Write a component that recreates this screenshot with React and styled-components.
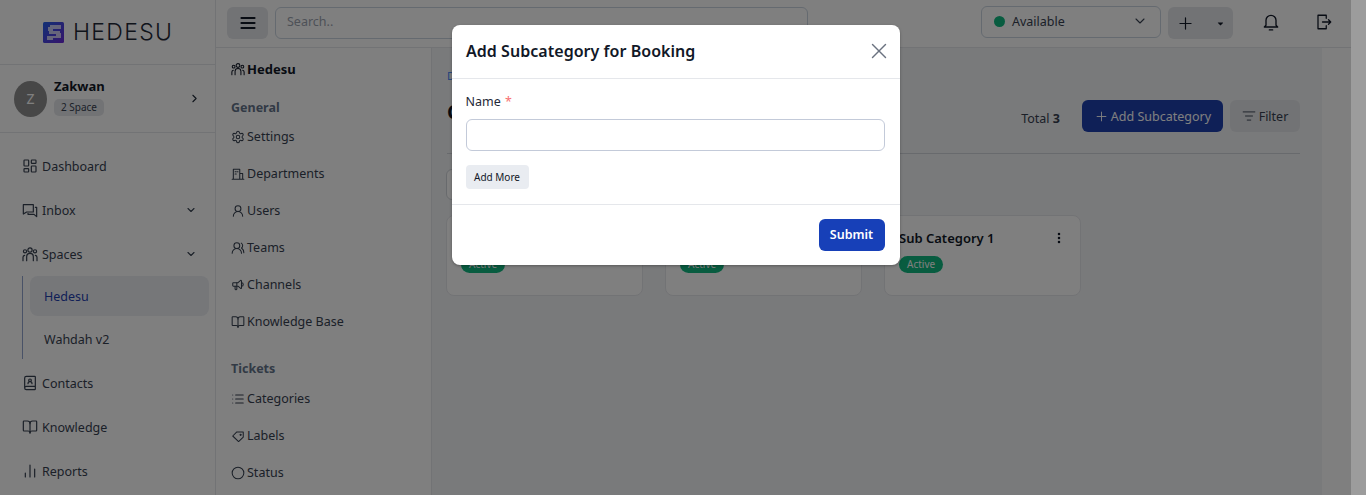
import React from "react";
import styled, { createGlobalStyle } from "styled-components";
import {
  TbMenu2, TbPlus, TbCaretDownFilled, TbDotsVertical, TbX, TbSpeakerphone,
} from "react-icons/tb";
import {
  LayoutDashboard, BookUser, BookOpen, ChartNoAxesColumn, ChevronDown, ChevronRight, Settings,
  UserRound, UsersRound, List, Circle, ListFilter,
} from "lucide-react";

const GlobalStyle = createGlobalStyle`
  html, body { margin: 0; padding: 0; height: 100%; overflow: hidden; }
  body { font-family: "Noto Sans", sans-serif; font-size: 12.5px; color: #1f2937; background: #fff; }
  * { box-sizing: border-box; }
`;

const Page = styled.div`
  position: relative;
  display: flex;
  width: 1366px;
  height: 495px;
  overflow: hidden;
`;

const Sidebar = styled.aside`
  flex: 0 0 216px;
  border-right: 1px solid #e5e7eb;
  background: #fff;
`;

const LogoBar = styled.div`
  height: 65px;
  display: flex;
  align-items: center;
  gap: 9px;
  padding-left: 43px;
  border-bottom: 1px solid #e5e7eb;
`;

const LogoText = styled.span`
  font-family: "Inter", sans-serif;
  font-weight: 300;
  font-size: 23px;
  letter-spacing: 1.3px;
  color: #1f2937;
`;

const UserBox = styled.div`
  height: 68px;
  display: flex;
  align-items: center;
  gap: 7px;
  padding: 0 14px;
  border-bottom: 1px solid #e5e7eb;
`;

const Avatar = styled.div`
  width: 33px;
  height: 36px;
  border-radius: 50%;
  background: #8f8f8f;
  color: #fff;
  display: flex;
  align-items: center;
  justify-content: center;
  font-size: 14px;
`;

const UserInfo = styled.div`
  flex: 1;
  display: flex;
  flex-direction: column;
  align-items: flex-start;
  gap: 5px;
  margin-bottom: 4px;
`;

const UserName = styled.strong`
  font-size: 13px;
  line-height: 16px;
  font-weight: 700;
  color: #111827;
`;

const SpaceBadge = styled.span`
  font-size: 10px;
  line-height: 17px;
  padding: 0 7px;
  border-radius: 5px;
  background: #e5e7eb;
  color: #374151;
`;

const Nav = styled.nav`
  padding: 11px 0 0 22px;
  display: flex;
  flex-direction: column;
`;

const NavItem = styled.div`
  height: 44px;
  display: flex;
  align-items: center;
  gap: 4px;
  padding-right: 18px;
  color: #374151;
  font-size: 12.5px;
  svg { flex: none; }
`;

const NavLabel = styled.span`
  flex: 1;
`;

const SubList = styled.div`
  display: flex;
  flex-direction: column;
  gap: 3px;
  padding-left: 7px;
  margin: 0 6px 2px 0;
  border-left: 1px solid #93a5cf;
`;

const SubItem = styled.div`
  height: 40px;
  display: flex;
  align-items: center;
  padding-left: 14px;
  border-radius: 8px;
  font-size: 12.5px;
  background: ${p => (p.$active ? "#eceef3" : "transparent")};
  color: ${p => (p.$active ? "#1e40af" : "#374151")};
`;

const Workspace = styled.div`
  flex: 1;
  min-width: 0;
  display: flex;
  flex-direction: column;
`;

const Topbar = styled.header`
  flex: 0 0 48px;
  display: flex;
  align-items: center;
  padding: 0 18px 1px 11px;
  border-bottom: 1px solid #e5e7eb;
`;

const GrayButton = styled.button`
  height: 32px;
  border: 0;
  border-radius: 6px;
  background: #e5e7eb;
  color: #111827;
  display: flex;
  align-items: center;
  justify-content: center;
  padding: 0;
  font: inherit;
`;

const MenuButton = styled(GrayButton)`
  width: 41px;
  margin-right: 7px;
`;

const SearchInput = styled.input`
  width: 533px;
  height: 32px;
  border: 1px solid #cbd5e1;
  border-radius: 6px;
  padding: 0 11px 3px;
  font: inherit;
  font-size: 12.5px;
  &::placeholder { color: #9ca3af; }
`;

const StatusSelect = styled.div`
  width: 180px;
  height: 32px;
  margin: 0 0 2px auto;
  border: 1px solid #cbd5e1;
  border-radius: 6px;
  display: flex;
  align-items: center;
  gap: 7px;
  padding: 0 12px 2px;
  font-size: 12.5px;
  color: #374151;
`;

const StatusDot = styled.span`
  width: 11px;
  height: 11px;
  border-radius: 50%;
  background: #10b981;
`;

const PlusGroup = styled(GrayButton)`
  width: 65px;
  margin-left: 7px;
  gap: 21px;
`;

const IconButton = styled.span`
  display: flex;
  color: #111827;
  margin: 0 0 2px ${p => p.$gap}px;
`;

const Body = styled.div`
  flex: 1;
  display: flex;
  min-height: 0;
`;

const SubMenu = styled.div`
  flex: 0 0 216px;
  border-right: 1px solid #e5e7eb;
  padding: 12px 0 0 15px;
`;

const SpaceTitle = styled.div`
  display: flex;
  align-items: center;
  gap: 2px;
  height: 18px;
  font-size: 13px;
  font-weight: 700;
  color: #111827;
`;

const GroupTitle = styled.div`
  font-weight: 700;
  font-size: 12.5px;
  line-height: 18px;
  color: #64748b;
  margin-top: ${p => p.$top}px;
  margin-bottom: ${p => p.$bottom}px;
`;

const MenuRow = styled.div`
  height: 37px;
  display: flex;
  align-items: center;
  gap: 2px;
  color: #374151;
  svg { flex: none; }
`;

const Main = styled.main`
  flex: 0 0 890px;
  background: #f3f4f6;
  padding: 20px 22px 0 15px;
`;

const Breadcrumb = styled.div`
  font-size: 11px;
  line-height: 16px;
  color: #3b82f6;
`;

const HeadRow = styled.div`
  display: flex;
  align-items: center;
  height: 41px;
  margin-top: 12px;
  padding-bottom: 1px;
`;

const PageTitle = styled.h1`
  flex: 1;
  margin: 0 0 10px;
  font-size: 20px;
  font-weight: 700;
  color: #111827;
`;

const Total = styled.span`
  margin: 4px 22px 0 0;
  color: #374151;
  b { font-weight: 700; }
`;

const PrimaryButton = styled.button`
  height: 32px;
  border: 0;
  border-radius: 6px;
  background: #1e40af;
  color: #fff;
  font: inherit;
  font-size: 12.5px;
  display: flex;
  align-items: center;
  justify-content: center;
  gap: 2px;
`;

const AddButton = styled(PrimaryButton)`
  width: 141px;
`;

const FilterButton = styled(GrayButton)`
  width: 70px;
  margin-left: 7px;
  gap: 3px;
  color: #374151;
`;

const Rule = styled.hr`
  border: 0;
  border-top: 1px solid #d1d5db;
  margin: 16px 0 15px;
`;

const Toolbar = styled.div`
  width: 200px;
  height: 31px;
  border: 1px solid #d1d5db;
  border-radius: 6px;
  margin-left: -1px;
  background: #fff;
`;

const CardGrid = styled.div`
  display: grid;
  grid-template-columns: repeat(4, 1fr);
  column-gap: 22px;
  margin: 15px 0 0 -1px;
`;

const Card = styled.div`
  height: 81px;
  background: #fff;
  border: 1px solid #e5e7eb;
  border-radius: 8px;
  padding: 13px 14px 0 14px;
`;

const CardHead = styled.div`
  display: flex;
  align-items: center;
  justify-content: space-between;
  font-weight: 600;
  color: #111827;
  font-size: 13px;
  line-height: 18px;
`;

const ActiveBadge = styled.span`
  display: inline-block;
  margin-top: 9px;
  padding: 0 8px;
  border-radius: 9px;
  background: #10b981;
  color: #fff;
  font-size: 10px;
  line-height: 17px;
`;

const ScrollTrack = styled.div`
  flex: 0 0 15px;
  background: #fff;
`;

const Backdrop = styled.div`
  position: absolute;
  inset: 0;
  background: rgba(0, 0, 0, 0.5);
  z-index: 5;
`;

const TrackShade = styled.div`
  position: absolute;
  top: 0;
  bottom: 0;
  right: 0;
  width: 15px;
  background: #9c9c9c;
  z-index: 6;
`;

const ModalLayer = styled.div`
  position: absolute;
  inset: 0 15px 0 0;
  z-index: 10;
  display: flex;
  justify-content: center;
  align-items: flex-start;
  padding-top: 25px;
`;

const Modal = styled.div`
  width: 448px;
  background: #fff;
  border-radius: 8px;
  box-shadow: 0 1px 3px rgba(0, 0, 0, 0.3);
`;

const ModalHead = styled.div`
  height: 54px;
  display: flex;
  align-items: center;
  justify-content: space-between;
  padding: 0 8px 2px 14.5px;
  border-bottom: 1px solid #e5e7eb;
`;

const ModalTitle = styled.h2`
  margin: 0;
  font-size: 16px;
  font-weight: 600;
  letter-spacing: 0.04px;
  color: #111827;
`;

const CloseIcon = styled.span`
  display: flex;
  color: #6b7280;
`;

const ModalBody = styled.div`
  padding: 13px 15px 15px 14px;
  border-bottom: 1px solid #e5e7eb;
`;

const FieldLabel = styled.label`
  display: block;
  font-size: 12.5px;
  line-height: 20px;
  margin-bottom: 7px;
  color: #1f2937;
  span { color: #f87171; margin-left: 1px; }
`;

const TextInput = styled.input`
  display: block;
  width: 100%;
  height: 32px;
  border: 1px solid #c3cad9;
  border-radius: 6px;
`;

const AddMore = styled.button`
  display: block;
  margin-top: 14px;
  width: 63px;
  height: 24px;
  padding: 0;
  border: 0;
  border-radius: 4px;
  background: #e9ecf1;
  color: #111827;
  font: inherit;
  font-size: 10px;
`;

const ModalFoot = styled.div`
  height: 60px;
  display: flex;
  align-items: center;
  justify-content: flex-end;
  padding: 0 15px;
`;

const SubmitButton = styled(PrimaryButton)`
  width: 66px;
  padding-bottom: 3px;
  font-weight: 600;
  background: #1740b8;
`;

// icons the packages don't have in this shape
const Line = ({ size = 16, width = 1.8, children }) => (
  <svg width={size} height={size} viewBox="0 0 24 24" fill="none" stroke="currentColor" strokeWidth={width} strokeLinejoin="round" strokeLinecap="round">
    {children}
  </svg>
);

const InboxIcon = ({ size }) => (
  <Line size={size}>
    <path d="M2 4h15v11H7l-5 3z" />
    <path d="M20 8h2v14l-4-3.5H9V17" />
  </Line>
);

const GroupIcon = ({ size }) => (
  <Line size={size}>
    <circle cx="12" cy="6" r="3.2" />
    <circle cx="4.5" cy="8" r="2.4" />
    <circle cx="19.5" cy="8" r="2.4" />
    <path d="M7 22v-6a5 5 0 0 1 10 0v6" />
    <path d="M1.5 22v-5a3 3 0 0 1 2.5-3M22.5 22v-5a3 3 0 0 0-2.5-3" />
  </Line>
);

const BuildingIcon = ({ size }) => (
  <Line size={size}>
    <path d="M2 21h20M4 21V4h11v17M15 11h5v10M7 8h2M7 12h2M11 8h1" />
  </Line>
);

const TagIcon = ({ size }) => (
  <Line size={size}>
    <path d="M3 12 10 5h11v9l-8 7.5z" />
    <circle cx="16.5" cy="10" r="1" />
  </Line>
);

const BellIcon = () => (
  <Line size={20} width={1.6}>
    <path d="M6 16V10a6 6 0 1 1 12 0v6l2 2H4z" />
    <path d="M10 21.5h4" />
  </Line>
);

const LogoutIcon = () => (
  <Line size={18} width={1.7}>
    <path d="M15 7V3H4v18h11v-4" />
    <path d="M10 12h11M18 9l3 3-3 3" />
  </Line>
);

function Logo() {
  return (
    <svg width="21" height="21" viewBox="0 0 21 21">
      <defs>
        <linearGradient id="logoFill" x1="0" y1="0" x2="1" y2="1">
          <stop offset="0" stopColor="#2563eb" />
          <stop offset="1" stopColor="#6d28d9" />
        </linearGradient>
      </defs>
      <rect width="21" height="21" rx="1.5" fill="url(#logoFill)" />
      <path d="M7 3h11v4H10v2h7v2h1v5h-8v2H4v-4h9v-2H6V9H5V5h2z" fill="#ffffff" opacity="0.72" />
    </svg>
  );
}

const mainNav = [
  { icon: LayoutDashboard, label: "Dashboard" },
  { icon: InboxIcon, label: "Inbox", caret: true },
  { icon: GroupIcon, label: "Spaces", caret: true },
];
const lowerNav = [
  { icon: BookUser, label: "Contacts" },
  { icon: BookOpen, label: "Knowledge" },
  { icon: ChartNoAxesColumn, label: "Reports" },
];
const general = [
  { icon: Settings, label: "Settings" },
  { icon: BuildingIcon, label: "Departments" },
  { icon: UserRound, label: "Users" },
  { icon: UsersRound, label: "Teams" },
  { icon: TbSpeakerphone, label: "Channels" },
  { icon: BookOpen, label: "Knowledge Base" },
];
const tickets = [
  { icon: List, label: "Categories" },
  { icon: TagIcon, label: "Labels" },
  { icon: Circle, label: "Status" },
];

function NavRow({ item }) {
  const Icon = item.icon;
  return (
    <NavItem>
      <Icon size={16} strokeWidth={1.8} />
      <NavLabel>{item.label}</NavLabel>
      {item.caret && <ChevronDown size={12} strokeWidth={2.2} />}
    </NavItem>
  );
}

function MenuEntry({ item }) {
  const Icon = item.icon;
  return (
    <MenuRow>
      <Icon size={14} strokeWidth={1.8} />
      <span>{item.label}</span>
    </MenuRow>
  );
}

function SubCard({ title }) {
  return (
    <Card>
      <CardHead>
        {title}
        <TbDotsVertical size={14} strokeWidth={2.4} />
      </CardHead>
      <ActiveBadge>Active</ActiveBadge>
    </Card>
  );
}

export default function App() {
  return (
    <Page>
      <GlobalStyle />
      <Sidebar>
        <LogoBar>
          <Logo />
          <LogoText>HEDESU</LogoText>
        </LogoBar>
        <UserBox>
          <Avatar>Z</Avatar>
          <UserInfo>
            <UserName>Zakwan</UserName>
            <SpaceBadge>2 Space</SpaceBadge>
          </UserInfo>
          <ChevronRight size={13} strokeWidth={2} />
        </UserBox>
        <Nav>
          {mainNav.map(item => <NavRow key={item.label} item={item} />)}
          <SubList>
            <SubItem $active>Hedesu</SubItem>
            <SubItem>Wahdah v2</SubItem>
          </SubList>
          {lowerNav.map(item => <NavRow key={item.label} item={item} />)}
        </Nav>
      </Sidebar>

      <Workspace>
        <Topbar>
          <MenuButton><TbMenu2 size={20} strokeWidth={2.2} /></MenuButton>
          <SearchInput placeholder="Search.." />
          <StatusSelect>
            <StatusDot />
            <NavLabel>Available</NavLabel>
            <ChevronDown size={16} strokeWidth={1.6} />
          </StatusSelect>
          <PlusGroup>
            <TbPlus size={19} strokeWidth={1.5} />
            <TbCaretDownFilled size={9} />
          </PlusGroup>
          <IconButton $gap={28}><BellIcon /></IconButton>
          <IconButton $gap={34}><LogoutIcon /></IconButton>
        </Topbar>
        <Body>
          <SubMenu>
            <SpaceTitle><GroupIcon size={14} />Hedesu</SpaceTitle>
            <GroupTitle $top={21} $bottom={1}>General</GroupTitle>
            {general.map(item => <MenuEntry key={item.label} item={item} />)}
            <GroupTitle $top={20} $bottom={2}>Tickets</GroupTitle>
            {tickets.map(item => <MenuEntry key={item.label} item={item} />)}
          </SubMenu>
          <Main>
            <Breadcrumb>Dashboard</Breadcrumb>
            <HeadRow>
              <PageTitle>Categories</PageTitle>
              <Total>Total <b>3</b></Total>
              <AddButton><TbPlus size={15} strokeWidth={1.5} />Add Subcategory</AddButton>
              <FilterButton><ListFilter size={14} strokeWidth={1.6} />Filter</FilterButton>
            </HeadRow>
            <Rule />
            <Toolbar />
            <CardGrid>
              <SubCard title="Sub Category 3" />
              <SubCard title="Sub Category 2" />
              <SubCard title="Sub Category 1" />
            </CardGrid>
          </Main>
        </Body>
      </Workspace>
      <ScrollTrack />

      <Backdrop />
      <TrackShade />
      <ModalLayer>
        <Modal>
          <ModalHead>
            <ModalTitle>Add Subcategory for Booking</ModalTitle>
            <CloseIcon><TbX size={26} strokeWidth={1.3} /></CloseIcon>
          </ModalHead>
          <ModalBody>
            <FieldLabel>Name <span>*</span></FieldLabel>
            <TextInput />
            <AddMore>Add More</AddMore>
          </ModalBody>
          <ModalFoot>
            <SubmitButton>Submit</SubmitButton>
          </ModalFoot>
        </Modal>
      </ModalLayer>
    </Page>
  );
}
